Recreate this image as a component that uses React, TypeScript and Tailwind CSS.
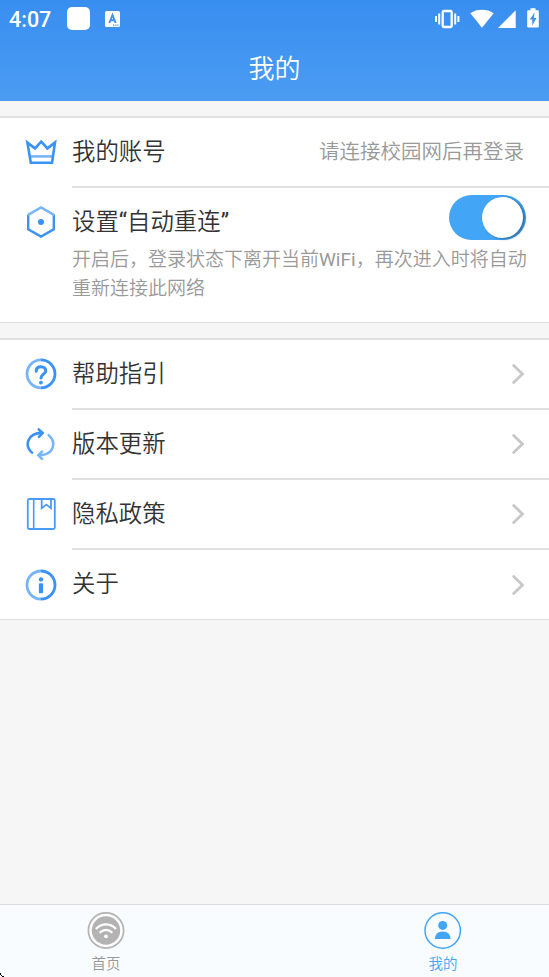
import { useState } from "react";
import type { ReactNode } from "react";
import clsx from "clsx";

const DARK = "#3a92f5";
const LIGHT = "#78b5f8";

function CrownIcon() {
	return (
		<svg width="32" height="32" viewBox="0 0 32 32" fill="none" className="shrink-0">
			<path d="M5 20.4H27.5" stroke={LIGHT} strokeWidth="2.6" />
			<path
				d="M2.4 6.6L5.8 26.8H27L30 6.6L22.4 12.4L16.2 5.6L10 12.4Z"
				stroke={DARK}
				strokeWidth="2.6"
			/>
		</svg>
	);
}

function HexagonIcon() {
	return (
		<svg width="32" height="32" viewBox="0 0 32 32" fill="none" className="shrink-0">
			<path d="M3.2 9V23.2L16 30.5L28.8 23.2V9" stroke={DARK} strokeWidth="2.4" />
			<path d="M2.6 9.2L16 1.5L29.4 9.2" stroke={LIGHT} strokeWidth="2.5" />
			<circle cx="16" cy="16" r="3" fill={DARK} />
		</svg>
	);
}

function HelpIcon() {
	return (
		<svg width="32" height="32" viewBox="0 0 32 32" fill="none" className="shrink-0">
			<path d="M16 1.8A14 14 0 0 0 16 29.8" stroke={LIGHT} strokeWidth="2.8" />
			<path d="M16 1.8A14 14 0 0 1 16 29.8" stroke={DARK} strokeWidth="2.8" />
			<path
				d="M11.2 13.2C11.2 10.2 13.2 8.8 16 8.8C18.9 8.8 20.8 10.6 20.8 12.9C20.8 16 16 16 16 20"
				stroke={DARK}
				strokeWidth="3"
				strokeLinecap="round"
			/>
			<circle cx="15.9" cy="24.6" r="1.9" fill={DARK} />
		</svg>
	);
}

function UpdateIcon() {
	return (
		<svg width="32" height="32" viewBox="0 0 32 32" fill="none" strokeLinecap="round" className="shrink-0">
			<path d="M7 24.6C-0.8 17.6 2.2 5.2 16.8 4.9" stroke={DARK} strokeWidth="2.6" />
			<path d="M13.8 1.5L17.6 5L14 8.8" stroke={DARK} strokeWidth="2.6" />
			<path d="M23.7 7.2C31.8 14.2 29.2 26.6 14.6 27.3" stroke={LIGHT} strokeWidth="2.6" />
			<path d="M17 23.6L13.4 27.2L17 30.8" stroke={LIGHT} strokeWidth="2.6" />
		</svg>
	);
}

function BookIcon() {
	return (
		<svg width="32" height="32" viewBox="0 0 32 32" fill="none" className="shrink-0">
			<rect x="2.8" y="1" width="27" height="30" rx="1.5" stroke="#4b9bf5" strokeWidth="1.8" />
			<path d="M8.7 1V31" stroke="#4b9bf5" strokeWidth="1.6" />
			<path d="M16.7 1V10.2L21.3 6.6L26 10.2V1" stroke="#4b9bf5" strokeWidth="1.8" />
		</svg>
	);
}

function InfoIcon() {
	return (
		<svg width="32" height="32" viewBox="0 0 32 32" fill="none" className="shrink-0">
			<path d="M16 2A14 14 0 0 0 16 30" stroke={LIGHT} strokeWidth="2.8" />
			<path d="M16 2A14 14 0 0 1 16 30" stroke={DARK} strokeWidth="2.8" />
			<circle cx="16" cy="10.4" r="2.2" fill={DARK} />
			<rect x="13.9" y="14.2" width="4.2" height="10" rx="1" fill={DARK} />
		</svg>
	);
}

function Chevron() {
	return (
		<svg width="12" height="20" viewBox="0 0 12 20" fill="none" className="shrink-0">
			<path d="M1.7 1.5L10.4 10L1.7 18.5" stroke="#c8c8c8" strokeWidth="2.8" strokeLinecap="round" />
		</svg>
	);
}

function StatusBar() {
	return (
		<div className="flex h-[37px] items-center justify-between pr-[9px] pl-[9px]">
			<div className="flex items-center">
				<span className="w-[58px] pt-px text-[21.5px] leading-[37px] font-medium">4:07</span>
				<div className="size-[23px] rounded-[5px] bg-white" />
				<svg width="15" height="16" viewBox="0 0 15 16" className="ml-[15px]">
					<rect width="15" height="16" rx="1.5" fill="#fff" />
					<path
						d="M4.3 12L7.5 4L10.7 12M5.4 9.3H9.6"
						fill="none"
						stroke="#3f91f0"
						strokeWidth="1.9"
					/>
					<path d="M8 14.1H9.2M10.2 14.1H11.4M12.3 14.1H13.5" stroke="#3f91f0" strokeWidth="1.2" />
				</svg>
			</div>
			<div className="flex items-center">
				<svg width="26" height="20" viewBox="0 0 26 20" fill="none" stroke="#fff" className="mr-[10px]">
					<rect x="8.7" y="2" width="9" height="16" rx="1.2" strokeWidth="2.3" />
					<path d="M2 7V13M5.2 4.5V15.5M21.2 4.5V15.5M24.4 7V13" strokeWidth="2" />
				</svg>
				<svg width="24" height="20" viewBox="0 0 24 20" fill="#fff" className="mr-[4px]">
					<path d="M0.3 4.2C7 -0.3 17 -0.3 23.7 4.2L12 18.8Z" />
				</svg>
				<svg width="18" height="20" viewBox="0 0 18 20" fill="#fff" className="mr-[11px]">
					<path d="M17.7 1.2V19H0Z" />
				</svg>
				<svg width="12" height="20" viewBox="0 0 12 20" className="mr-px overflow-visible">
					<path
						d="M1.2 1.2H3.5V-0.8H8.5V1.2H10.8Q11.8 1.2 11.8 2.2V17.5Q11.8 18.5 10.8 18.5H1.2Q0.2 18.5 0.2 17.5V2.2Q0.2 1.2 1.2 1.2Z"
						fill="#fff"
					/>
					<path d="M7.6 3.6L2.8 10.5H5.3V16.4L9.5 9H6.9Z" fill="#3f91f0" />
				</svg>
			</div>
		</div>
	);
}

function Row({
	icon,
	label,
	last,
	children,
}: {
	icon: ReactNode;
	label: string;
	last?: boolean;
	children?: ReactNode;
}) {
	return (
		<div className={clsx("flex pl-[25px]", last ? "h-[69px]" : "h-[70px]")}>
			<div className={clsx("flex w-[47px] items-center", !last && "pb-0.5")}>{icon}</div>
			<div
				className={clsx(
					"flex flex-1 items-center justify-between pr-[25px]",
					!last && "border-b-2 border-[#e0e0e0]"
				)}
			>
				<span className={clsx("text-[23.4px] text-[#333]", !last && "pt-0.5")}>{label}</span>
				{children}
			</div>
		</div>
	);
}

const menuItems = [
	{ label: "帮助指引", icon: <HelpIcon /> },
	{ label: "版本更新", icon: <UpdateIcon /> },
	{ label: "隐私政策", icon: <BookIcon /> },
	{ label: "关于", icon: <InfoIcon /> },
];

export default function App() {
	const [autoConnect, setAutoConnect] = useState(true);

	return (
		<div className="relative flex h-[977px] w-[549px] flex-col overflow-hidden bg-[#f6f6f6] font-[Roboto,'Noto_Sans_CJK_SC',sans-serif] font-[350]">
			<header className="h-[101px] bg-linear-to-b from-[#388ef0] to-[#4b9cf2] text-white">
				<StatusBar />
				<h1 className="pt-[12px] text-center text-[26px] leading-[40px] font-[350]">我的</h1>
			</header>

			<section className="mt-[15px] h-[207px] border-t-2 border-b border-[#e0e0e0] bg-white">
				<Row icon={<CrownIcon />} label="我的账号">
					<span className="pt-px text-[20.5px] text-[#999]">请连接校园网后再登录</span>
				</Row>
				<div className="flex pl-[25px]">
					<div className="w-[47px] pt-[18px]">
						<HexagonIcon />
					</div>
					<div className="flex-1">
						<div className="flex h-[57px] justify-between pr-[23px]">
							<span className="pt-[16px] text-[23.4px] leading-[36px] text-[#333]">
								设置<span className="font-normal">“</span>自动重连
								<span className="font-normal">”</span>
							</span>
							<button
								type="button"
								onClick={() => setAutoConnect(!autoConnect)}
								className={clsx(
									"mt-[7px] flex h-[45px] w-[77px] items-center rounded-full px-[3px]",
									autoConnect ? "justify-end bg-[#42a5f5]" : "bg-[#ccc]"
								)}
							>
								<span className="size-[41px] rounded-full bg-white shadow-[2px_1px_3px_rgba(0,0,0,0.35)]" />
							</button>
						</div>
						<p className="w-[460px] text-[19px] leading-[29px] text-[#999]">
							开启后，登录状态下离开当前<span className="font-normal">WiFi</span>
							，再次进入时将自动重新连接此网络
						</p>
					</div>
				</div>
			</section>

			<section className="mt-[15px] border-t-2 border-b border-[#e0e0e0] bg-white">
				{menuItems.map((item, index) => (
					<Row
						key={item.label}
						icon={item.icon}
						label={item.label}
						last={index === menuItems.length - 1}
					>
						<Chevron />
					</Row>
				))}
			</section>

			<nav className="mt-auto flex h-[73px] justify-between border-t border-[#dedede] bg-[#f8fcff] px-[76px] text-[14.5px]">
				<div className="flex w-[60px] flex-col items-center pt-[7px] text-[#999]">
					<svg width="38" height="38" viewBox="0 0 38 38" fill="none">
						<circle cx="19" cy="18.5" r="17.6" stroke="#b3b3b3" strokeWidth="1.7" fill="#fff" />
						<circle cx="19" cy="18.5" r="14.2" fill="#b3b3b3" />
						<path
							d="M9.5 16.3C15 11 23 11 28.5 16.3M13.4 20.2C16.8 17.2 21.2 17.2 24.6 20.2"
							stroke="#fff"
							strokeWidth="2.3"
							strokeLinecap="round"
						/>
						<circle cx="19" cy="24.3" r="1.9" fill="#fff" />
					</svg>
					<span className="mt-[5px] leading-[20px]">首页</span>
				</div>
				<div className="flex w-[60px] flex-col items-center pt-[7px] text-[#42a5f5]">
					<svg width="38" height="38" viewBox="0 0 38 38" fill="none">
						<circle cx="18.7" cy="18.5" r="17.7" stroke="#42a5f5" strokeWidth="1.5" />
						<circle cx="18.7" cy="13.4" r="4.5" fill="#42a5f5" />
						<path d="M10.9 27C10.9 22.3 13.7 19.4 18.7 19.4C23.7 19.4 26.5 22.3 26.5 27Z" fill="#42a5f5" />
					</svg>
					<span className="mt-[5px] leading-[20px]">我的</span>
				</div>
			</nav>

			<svg width="4" height="4" viewBox="0 0 4 4" className="absolute bottom-0 left-0">
				<path d="M0 0H1V2H2V3H4V4H2V3H1V2H0Z" fill="#000" />
			</svg>
		</div>
	);
}
